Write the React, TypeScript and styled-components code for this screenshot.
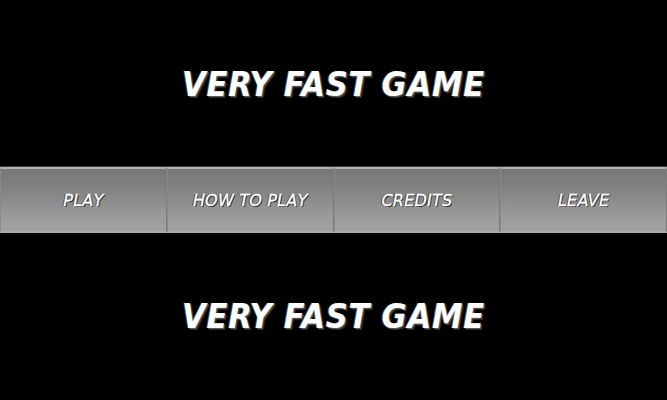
import styled, { createGlobalStyle } from "styled-components";

const GlobalStyle = createGlobalStyle`
  html, body {
    margin: 0;
    padding: 0;
    background: #000;
  }
  body {
    width: 667px;
    height: 400px;
    overflow: hidden;
  }
`;

const Screen = styled.div`
  width: 667px;
  height: 400px;
  background: #000;
  display: flex;
  flex-direction: column;
  align-items: stretch;
  font-family: "DejaVu Sans", sans-serif;
`;

const Title = styled.h1<{ $top: number }>`
  margin: ${(p) => p.$top}px 0 0;
  height: 40px;
  line-height: 40px;
  text-align: center;
  color: #fff;
  font-family: "DejaVu Sans Condensed", "DejaVu Sans", sans-serif;
  font-size: 34px;
  font-weight: bold;
  font-style: italic;
  letter-spacing: 0.8px;
  text-shadow: 1px 1px 0 #5a5a5a, 2px 2px 0 #2a2a2a, -1px 0 0 #444;
`;

const Menu = styled.nav`
  margin-top: 62px;
  height: 68px;
  display: grid;
  grid-template-columns: repeat(4, 1fr);
  background: #000;
  border-top: 1px solid #3a3a3a;
`;

const MenuButton = styled.button`
  margin: 0;
  padding: 0;
  border: none;
  border-top: 2px solid #b2b2b2;
  border-bottom: 2px solid #ababab;
  border-left: 1px solid #8a8a8a;
  border-right: 1px solid #7c7c7c;
  height: 66px;
  background: linear-gradient(to bottom, #777 0%, #838383 35%, #9a9a9a 75%, #a2a2a2 100%);
  color: #fff;
  font-family: "DejaVu Sans", sans-serif;
  font-size: 16px;
  font-style: italic;
  font-weight: normal;
  -webkit-text-stroke: 0.4px #fff;
  letter-spacing: 0.2px;
  text-shadow: 1px 1px 0 #222, -1px 0 0 #333;
  cursor: pointer;
`;

export default function App() {
  return (
    <>
      <GlobalStyle />
      <Screen>
        <Title $top={64}>VERY FAST GAME</Title>
        <Menu>
          <MenuButton>PLAY</MenuButton>
          <MenuButton>HOW TO PLAY</MenuButton>
          <MenuButton>CREDITS</MenuButton>
          <MenuButton>LEAVE</MenuButton>
        </Menu>
        <Title $top={61}>VERY FAST GAME</Title>
      </Screen>
    </>
  );
}
